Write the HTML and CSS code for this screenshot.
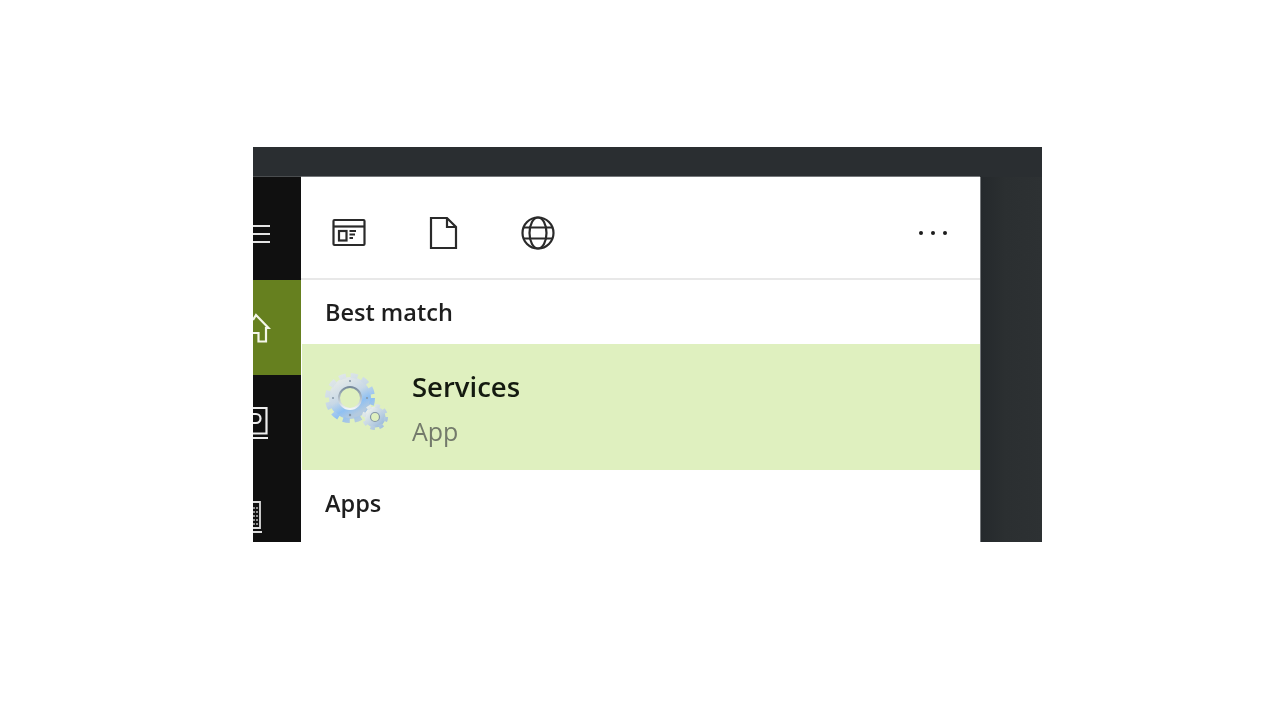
FILE: index.html
```html
<!DOCTYPE html>
<html lang="en">
<head>
<meta charset="utf-8">
<title>Services search</title>
<link rel="stylesheet" href="styles.css">
</head>
<body>
<main class="window">
  <div class="topbar"></div>
  <div class="body">
    <nav class="rail">
      <div class="rail-item menu">
        <svg width="18" height="20" viewBox="0 0 18 20"><path d="M0 2H17M0 10H17M0 18H17" stroke="#e4e4e4" stroke-width="2.200" fill="none"/></svg>
      </div>
      <div class="rail-item home">
        <svg width="18" height="32" viewBox="0 0 18 32"><path d="M0 8 L3 3 L15.500 16 H13 V29.500 H5.500 V21 H0" stroke="#f4f6ea" stroke-width="2.200" fill="none"/></svg>
      </div>
      <div class="rail-item device">
        <svg width="16" height="34" viewBox="0 0 16 34"><path d="M0 2H13.500V27.500H0M0 32H15" stroke="#eee" stroke-width="2.200" fill="none"/><path d="M0 8H3A4.500 4.500 0 0 1 3 17H0" stroke="#eee" stroke-width="2.200" fill="none"/></svg>
      </div>
      <div class="rail-item laptop">
        <svg width="10" height="34" viewBox="0 0 10 34"><path d="M0 2H7V28H0M0 32H9" stroke="#ddd" stroke-width="1.800" fill="none"/><path d="M0 8H5M0 12H5M0 16H5M0 20H5M0 24H5" stroke="#bbb" stroke-width="1.400" stroke-dasharray="2 1" fill="none"/></svg>
      </div>
    </nav>
    <section class="panel">
      <header class="toolbar">
        <div class="tools">
          <svg class="tool" width="34" height="30" viewBox="0 0 34 30"><g stroke="#2a2a2a" stroke-width="2.200" fill="none"><rect x="1.500" y="2" width="31" height="25" rx="1"/><path d="M1.500 8.500H32.500"/><rect x="7" y="13" width="7.500" height="9.500"/></g><path d="M17.500 13H24M17.500 16.500H23M17.500 20H21" stroke="#2a2a2a" stroke-width="1.800"/></svg>
          <svg class="tool" width="29" height="34" viewBox="0 0 29 34"><path d="M2 2H18L27 11V32H2ZM18 2V11H27" stroke="#2a2a2a" stroke-width="2.200" fill="none"/></svg>
          <svg class="tool" width="34" height="34" viewBox="0 0 34 34"><g stroke="#2a2a2a" stroke-width="2.200" fill="none"><circle cx="17" cy="17" r="15.500"/><ellipse cx="17" cy="17" rx="8.500" ry="15.500"/><path d="M3 11.500H31M3 22.500H31"/></g></svg>
        </div>
        <div class="more"><span></span><span></span><span></span></div>
      </header>
      <h2 class="heading">Best match</h2>
      <div class="result">
        <svg class="gears" width="66" height="70" viewBox="0 0 66 70">
          <defs>
            <linearGradient id="metal" x1="0.150" y1="0" x2="0.700" y2="1">
              <stop offset="0" stop-color="#e2e8e8"/>
              <stop offset="0.450" stop-color="#c8d8e6"/>
              <stop offset="0.750" stop-color="#8fc0f2"/>
              <stop offset="1" stop-color="#b4cadf"/>
            </linearGradient>
            <linearGradient id="small" x1="0" y1="0" x2="1" y2="1">
              <stop offset="0" stop-color="#eef1ec"/>
              <stop offset="1" stop-color="#9dbcdc"/>
            </linearGradient>
            <linearGradient id="rim" x1="0" y1="0" x2="0" y2="1">
              <stop offset="0" stop-color="#76899a"/>
              <stop offset="1" stop-color="#f2f6f8"/>
            </linearGradient>
          </defs>
          <circle cx="27" cy="26" r="16" fill="none" stroke="url(#metal)" stroke-width="10"/>
          <circle cx="27" cy="26" r="22.500" fill="none" stroke="url(#metal)" stroke-width="5" stroke-dasharray="7 4.780"/>
          <circle cx="27" cy="26" r="11" fill="none" stroke="url(#rim)" stroke-width="2"/>
          <g fill="#8496a6">
            <circle cx="27" cy="9" r="1"/>
            <circle cx="10" cy="26" r="1"/>
            <circle cx="44" cy="26" r="1"/>
            <circle cx="27" cy="43" r="1.200"/>
          </g>
          <circle cx="52" cy="45" r="7.500" fill="none" stroke="url(#small)" stroke-width="6"/>
          <circle cx="52" cy="45" r="11" fill="none" stroke="url(#small)" stroke-width="4" stroke-dasharray="4.400 4.240"/>
          <circle cx="52" cy="45" r="4.500" fill="none" stroke="#8496a6" stroke-width="1.200"/>
        </svg>
        <div class="result-text">
          <div class="result-title">Services</div>
          <div class="result-sub">App</div>
        </div>
      </div>
      <h2 class="heading apps">Apps</h2>
    </section>
    <div class="edge"></div>
  </div>
</main>
</body>
</html>
```
FILE: styles.css
```css
html, body {
  margin: 0;
  padding: 0;
  background: #fff;
}
body {
  height: 720px;
  overflow: hidden;
  font-family: "Open Sans", "Noto Sans", sans-serif;
}
.window {
  width: 789px;
  height: 395px;
  margin: 147px 0 0 253px;
  background: #2a2e31;
  display: flex;
  flex-direction: column;
  overflow: hidden;
  filter: blur(0.45px);
}
.topbar {
  height: 30px;
  flex: none;
  background: #2a2e31;
}
.body {
  flex: 1;
  display: flex;
  min-height: 0;
}
.rail {
  width: 48px;
  flex: none;
  background: #101010;
  display: flex;
  flex-direction: column;
  box-shadow: 0 -1px 0 #4a4d4f;
}
.rail-item {
  display: flex;
  align-items: center;
  box-sizing: border-box;
}
.menu { height: 103px; padding-top: 11px; }
.home { height: 95px; background: #66801f; }
.device { height: 95px; }
.laptop { height: 70px; align-items: flex-start; padding-top: 30px; }
.panel {
  width: 679px;
  flex: none;
  background: #fff;
  display: flex;
  flex-direction: column;
  box-shadow: 0 -1px 0 #74777a;
}
.toolbar {
  height: 103px;
  flex: none;
  box-sizing: border-box;
  border-bottom: 2px solid #e8e8e8;
  display: flex;
  align-items: center;
  justify-content: space-between;
  padding: 11px 33px 0 31px;
}
.tools {
  display: flex;
  align-items: center;
  gap: 63px;
}
.more {
  display: flex;
  gap: 8px;
}
.more span {
  width: 4px;
  height: 4px;
  border-radius: 50%;
  background: #1c1c1c;
}
.heading {
  margin: 0;
  height: 64px;
  padding-left: 24px;
  font-size: 23.5px;
  font-weight: 600;
  line-height: 64px;
  color: #1e1e1e;
}
.result {
  height: 126px;
  flex: none;
  margin-left: 1px;
  background: #dff0bf;
  display: flex;
  align-items: center;
  padding-left: 21px;
}
.gears { flex: none; }
.result-text {
  margin-left: 23px;
}
.result-title {
  font-size: 27.5px;
  font-weight: 600;
  line-height: 40px;
  margin-top: 2px;
  color: #141a10;
}
.result-sub {
  font-size: 25px;
  line-height: 38px;
  margin-top: 5px;
  color: #737a6b;
}
.apps {
  height: 64px;
  line-height: 66px;
}
.edge {
  flex: 1;
  border-left: 1px solid #74777a;
  background: linear-gradient(90deg, #25292c 0%, #2b2f31 40%, #2d3133 100%);
}
```
